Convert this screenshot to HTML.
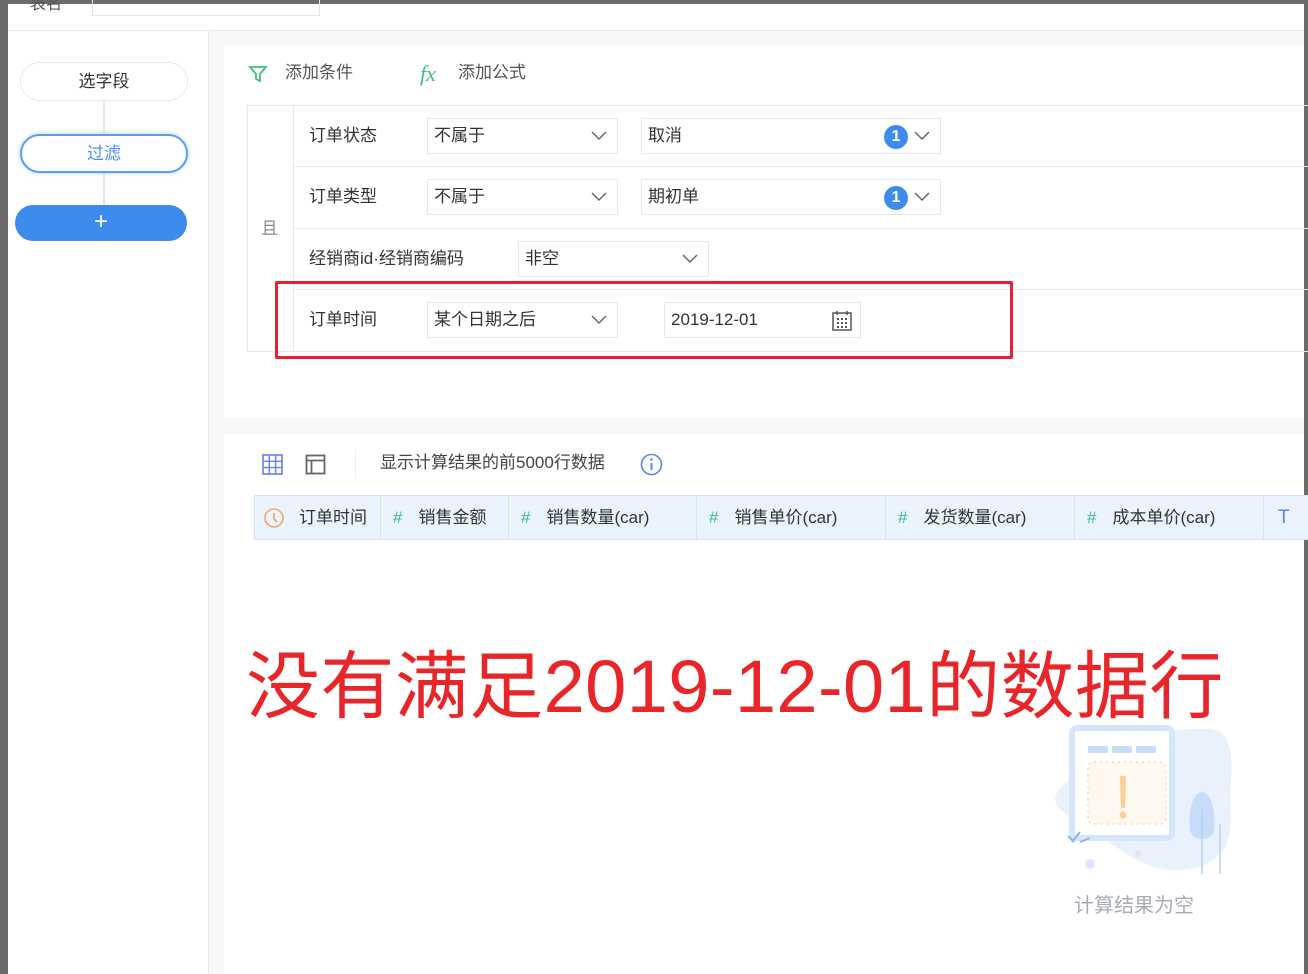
<!DOCTYPE html>
<html><head><meta charset="utf-8"><style>
*{box-sizing:border-box;margin:0;padding:0}
body{width:1308px;height:974px;overflow:hidden;background:#6b6b6b;font-family:"Liberation Sans","Noto Sans CJK SC",sans-serif;color:#333;font-size:16px;position:relative}
.abs{position:absolute}
.sel{position:absolute;height:36px;border:1px solid #e4e6ea;border-radius:2px;background:#fff;padding-left:6px;line-height:34px;font-size:17px;color:#333}
.chev{position:absolute;right:10px;top:12px;width:16px;height:10px}
.lbl{position:absolute;font-size:17px;color:#333;line-height:20px}
.hline{position:absolute;height:1px;background:#e6e8eb}
.th{position:absolute;top:0;height:43px;line-height:43px;font-size:17px;color:#333;border-right:1px solid #d3e3f7}
.hash{color:#3fb5a0;margin:0 16px 0 12px}
</style></head><body>
<div class="abs" style="left:8px;top:4px;width:1296px;height:970px;background:#fff"></div>
<div class="abs" style="left:30px;top:-10px;font-size:16px;color:#555">表名</div>
<div class="abs" style="left:92px;top:-2px;width:228px;height:18px;border:1px solid #e4e6ea;border-top:none"></div>
<div class="abs" style="left:8px;top:30px;width:1296px;height:1px;background:#e8e9ec"></div>
<div class="abs" style="left:209px;top:31px;width:1095px;height:943px;background:#f6f7f9"></div>
<div class="abs" style="left:208px;top:31px;width:1px;height:943px;background:#e8e9ec"></div>
<div class="abs" style="left:103px;top:100px;width:2px;height:110px;background:#e3e5e8"></div>
<div class="abs" style="left:20px;top:62px;width:168px;height:39px;border:1px solid #e6e8eb;border-radius:20px;background:#fff;text-align:center;line-height:37px;font-size:17px">选字段</div>
<div class="abs" style="left:20px;top:134px;width:168px;height:39px;border:2px solid #5b9df0;border-radius:20px;background:#fff;text-align:center;line-height:35px;font-size:17px;color:#4a8ff0;box-shadow:0 0 4px rgba(80,140,240,.4)">过滤</div>
<div class="abs" style="left:15px;top:205px;width:172px;height:36px;border-radius:18px;background:#3d8bec;text-align:center;line-height:34px;font-size:24px;color:#fff">+</div>
<div class="abs" style="left:224px;top:45px;width:1080px;height:373px;background:#fff"></div>
<svg class="abs" style="left:248px;top:64px" width="20" height="20" viewBox="0 0 20 20"><path d="M2 3h16l-6 7v7l-4-2v-5z" fill="none" stroke="#3cc27a" stroke-width="1.8"/></svg>
<div class="abs" style="left:285px;top:63px;font-size:17px;color:#555;line-height:20px">添加条件</div>
<div class="abs" style="left:420px;top:62px;font-size:22px;color:#3cc27a;font-style:italic;font-family:'Liberation Serif',serif;line-height:24px">fx</div>
<div class="abs" style="left:458px;top:63px;font-size:17px;color:#555;line-height:20px">添加公式</div>
<div class="abs" style="left:247px;top:105px;width:1070px;height:247px;border:1px solid #e6e8eb"></div>
<div class="abs" style="left:293px;top:105px;width:1px;height:247px;background:#e6e8eb"></div>
<div class="abs" style="left:261px;top:219px;font-size:17px;color:#888;line-height:20px">且</div>
<div class="hline" style="left:293px;top:166px;width:1015px"></div>
<div class="hline" style="left:293px;top:228px;width:1015px"></div>
<div class="hline" style="left:293px;top:289px;width:1015px"></div>
<div class="lbl" style="left:309px;top:126px">订单状态</div>
<div class="sel" style="left:427px;top:118px;width:191px">不属于<svg class="chev" viewBox="0 0 16 10"><path d="M1 1l7 7 7-7" fill="none" stroke="#666" stroke-width="1.5"/></svg></div>
<div class="sel" style="left:641px;top:118px;width:300px">取消<span class="abs" style="left:242px;top:6px;width:24px;height:24px;border-radius:12px;background:#3d8bec;color:#fff;font-weight:bold;text-align:center;line-height:24px;font-size:16px">1</span><svg class="chev" viewBox="0 0 16 10"><path d="M1 1l7 7 7-7" fill="none" stroke="#666" stroke-width="1.5"/></svg></div>
<div class="lbl" style="left:309px;top:187px">订单类型</div>
<div class="sel" style="left:427px;top:179px;width:191px">不属于<svg class="chev" viewBox="0 0 16 10"><path d="M1 1l7 7 7-7" fill="none" stroke="#666" stroke-width="1.5"/></svg></div>
<div class="sel" style="left:641px;top:179px;width:300px">期初单<span class="abs" style="left:242px;top:6px;width:24px;height:24px;border-radius:12px;background:#3d8bec;color:#fff;font-weight:bold;text-align:center;line-height:24px;font-size:16px">1</span><svg class="chev" viewBox="0 0 16 10"><path d="M1 1l7 7 7-7" fill="none" stroke="#666" stroke-width="1.5"/></svg></div>
<div class="lbl" style="left:309px;top:249px">经销商id·经销商编码</div>
<div class="sel" style="left:518px;top:241px;width:191px">非空<svg class="chev" viewBox="0 0 16 10"><path d="M1 1l7 7 7-7" fill="none" stroke="#666" stroke-width="1.5"/></svg></div>
<div class="lbl" style="left:309px;top:310px">订单时间</div>
<div class="sel" style="left:427px;top:302px;width:191px">某个日期之后<svg class="chev" viewBox="0 0 16 10"><path d="M1 1l7 7 7-7" fill="none" stroke="#666" stroke-width="1.5"/></svg></div>
<div class="sel" style="left:664px;top:302px;width:197px">2019-12-01<svg class="abs" style="left:166px;top:7px" width="22" height="22" viewBox="0 0 22 22"><rect x="2" y="3" width="18" height="17" fill="none" stroke="#555" stroke-width="1.5"/><path d="M6 1v4M16 1v4" stroke="#555" stroke-width="1.5"/><g fill="#555"><rect x="6" y="8" width="2" height="2"/><rect x="10" y="8" width="2" height="2"/><rect x="14" y="8" width="2" height="2"/><rect x="6" y="12" width="2" height="2"/><rect x="10" y="12" width="2" height="2"/><rect x="14" y="12" width="2" height="2"/><rect x="6" y="16" width="2" height="2"/><rect x="10" y="16" width="2" height="2"/><rect x="14" y="16" width="2" height="2"/></g></svg></div>
<div class="abs" style="left:275px;top:281px;width:738px;height:78px;border:3px solid #e8212e;border-radius:2px"></div>
<div class="abs" style="left:224px;top:434px;width:1080px;height:540px;background:#fff"></div>
<svg class="abs" style="left:262px;top:454px" width="21" height="21" viewBox="0 0 21 21"><rect x="1" y="1" width="19" height="19" fill="none" stroke="#6d7cf0" stroke-width="1.6"/><path d="M7.3 1v19M13.6 1v19M1 7.3h19M1 13.6h19" stroke="#6d7cf0" stroke-width="1.4"/></svg>
<svg class="abs" style="left:305px;top:454px" width="21" height="21" viewBox="0 0 21 21"><rect x="1.5" y="1.5" width="18" height="18" fill="none" stroke="#666" stroke-width="1.8"/><path d="M1.5 6.5h18M6.5 6.5v13" stroke="#666" stroke-width="1.8"/></svg>
<div class="abs" style="left:355px;top:449px;width:1px;height:30px;background:#eee"></div>
<div class="abs" style="left:380px;top:453px;font-size:17px;color:#444;line-height:20px">显示计算结果的前5000行数据</div>
<svg class="abs" style="left:640px;top:453px" width="23" height="23" viewBox="0 0 23 23"><circle cx="11.5" cy="11.5" r="10" fill="none" stroke="#5b86f0" stroke-width="1.6"/><path d="M11.5 10v7" stroke="#5b86f0" stroke-width="2"/><circle cx="11.5" cy="6.5" r="1.3" fill="#5b86f0"/></svg>
<div class="abs" style="left:254px;top:495px;width:1054px;height:45px;background:#ebf3fe;border:1px solid #d3e3f7;border-right:none">
 <div class="th" style="left:0;width:126px"><svg style="position:absolute;left:8px;top:11px" width="22" height="22" viewBox="0 0 22 22"><circle cx="11" cy="11" r="9" fill="none" stroke="#f0a86a" stroke-width="1.6"/><path d="M11 6v6l3 3" fill="none" stroke="#f0a86a" stroke-width="1.6"/></svg><span style="position:absolute;left:44px">订单时间</span></div>
 <div class="th" style="left:126px;width:128px"><span class="hash">#</span>销售金额</div>
 <div class="th" style="left:254px;width:188px"><span class="hash">#</span>销售数量(car)</div>
 <div class="th" style="left:442px;width:189px"><span class="hash">#</span>销售单价(car)</div>
 <div class="th" style="left:631px;width:189px"><span class="hash">#</span>发货数量(car)</div>
 <div class="th" style="left:820px;width:189px"><span class="hash">#</span>成本单价(car)</div>
 <div class="th" style="left:1009px;width:60px;border:none;color:#5b86f0;padding-left:14px;font-size:19px">T</div>
</div>
<div class="abs" style="left:246px;top:642px;font-size:74px;line-height:90px;color:#e8262a;white-space:nowrap;letter-spacing:0.4px">没有满足2019-12-01的数据行</div>
<svg class="abs" style="left:1040px;top:724px" width="200" height="150" viewBox="0 0 200 150">
<path d="M30 55C50 35 120 0 170 5c30 3 20 50 20 70s10 60-40 70c-40 8-70-20-100-40S0 80 30 55z" fill="#e9f1fd"/>
<rect x="32" y="4" width="100" height="110" rx="5" fill="#fff" stroke="#d6e6fb" stroke-width="6"/>
<rect x="48" y="22" width="20" height="7" rx="2" fill="#c7dcf8"/><rect x="72" y="22" width="20" height="7" rx="2" fill="#c7dcf8"/><rect x="96" y="22" width="20" height="7" rx="2" fill="#c7dcf8"/>
<rect x="48" y="38" width="78" height="62" rx="6" fill="#fef8f0" stroke="#fde0c0" stroke-width="2" stroke-dasharray="2 4"/>
<path d="M80 52h6l-1 32h-4z" fill="#fcd098"/><circle cx="83" cy="91" r="3.5" fill="#fcd098"/>
<path d="M162 68c-10 0-14 22-12 38 2 12 22 12 24 0 2-16-2-38-12-38z" fill="#c7dcf8"/>
<path d="M162 86v66M180 100v50" stroke="#b6d0f5" stroke-width="1.5"/>
<circle cx="50" cy="140" r="5" fill="#dbe8fb"/><circle cx="98" cy="130" r="3.5" fill="#dbe8fb"/>
<path d="M32 118l8-10M40 118l10-4M28 112l6 6" stroke="#8cb4f0" stroke-width="2"/>
</svg>
<div class="abs" style="left:1074px;top:894px;font-size:20px;color:#a8adb5;line-height:24px">计算结果为空</div>
</body></html>
